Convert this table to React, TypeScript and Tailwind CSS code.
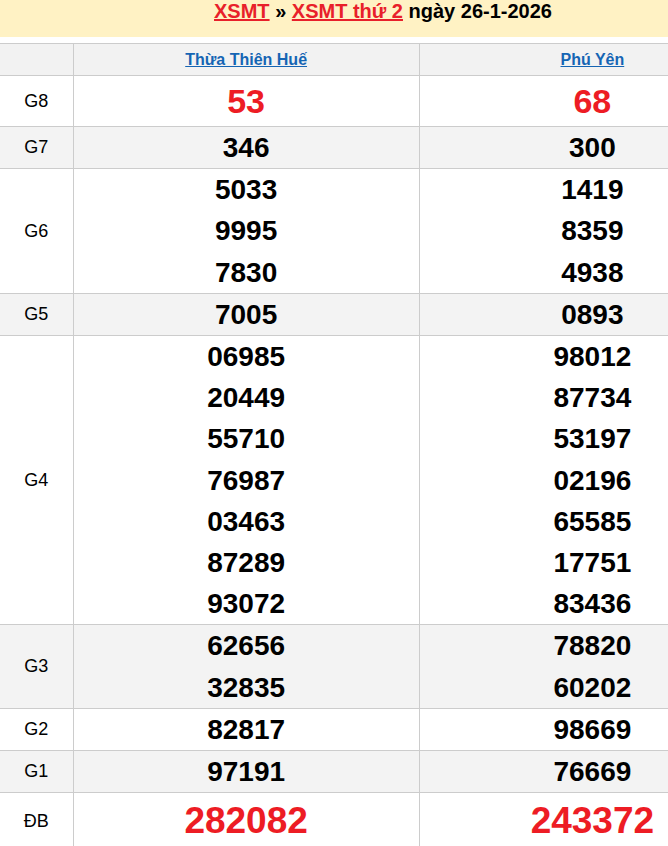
const rows: { label: string; a: string[]; b: string[]; kind?: "g8" | "db" }[] = [
  { label: "G8", a: ["53"], b: ["68"], kind: "g8" },
  { label: "G7", a: ["346"], b: ["300"] },
  { label: "G6", a: ["5033", "9995", "7830"], b: ["1419", "8359", "4938"] },
  { label: "G5", a: ["7005"], b: ["0893"] },
  {
    label: "G4",
    a: ["06985", "20449", "55710", "76987", "03463", "87289", "93072"],
    b: ["98012", "87734", "53197", "02196", "65585", "17751", "83436"],
  },
  { label: "G3", a: ["62656", "32835"], b: ["78820", "60202"] },
  { label: "G2", a: ["82817"], b: ["98669"] },
  { label: "G1", a: ["97191"], b: ["76669"] },
  { label: "ĐB", a: ["282082"], b: ["243372"], kind: "db" },
]

function Cell({ nums, kind }: { nums: string[]; kind?: "g8" | "db" }) {
  return (
    <td className="border border-[#cccccc] p-0 text-center align-middle">
      {nums.map((n) => (
        <div
          key={n}
          className={
            kind === "g8"
              ? "text-[34px] font-bold leading-[50px] text-[#ed1c24]"
              : kind === "db"
                ? "text-[37px] font-bold leading-[56px] text-[#ed1c24]"
                : "text-[28px] font-bold leading-[41.2px] text-black"
          }
        >
          {n}
        </div>
      ))}
    </td>
  )
}

export default function App() {
  return (
    <div className="w-full overflow-hidden bg-white" style={{ fontFamily: '"Liberation Sans", Arial, sans-serif' }}>
      <div className="w-[766px]">
        <div className="h-[37px] bg-[#fff2c4] text-center text-[20px] font-bold leading-[23px]">
          <a href="#" className="text-[#e8202a] underline">XSMT</a>
          <span> » </span>
          <a href="#" className="text-[#e8202a] underline">XSMT thứ 2</a>
          <span> ngày 26-1-2026</span>
        </div>
        <table className="mt-[6px] w-full table-fixed border-collapse">
          <colgroup>
            <col className="w-[73px]" />
            <col />
            <col />
          </colgroup>
          <thead>
            <tr className="h-[32px] bg-[#f2f2f2]">
              <th className="border border-l-0 border-[#cccccc]"></th>
              <th className="border border-[#cccccc] text-[16px] font-bold">
                <a href="#" className="text-[#1565b4] underline">Thừa Thiên Huế</a>
              </th>
              <th className="border border-[#cccccc] text-[16px] font-bold">
                <a href="#" className="text-[#1565b4] underline">Phú Yên</a>
              </th>
            </tr>
          </thead>
          <tbody>
            {rows.map((r, i) => (
              <tr key={r.label} className={i % 2 === 1 ? "bg-[#f3f3f3]" : "bg-white"}>
                <td className="border border-l-0 border-[#cccccc] text-center align-middle text-[18px] text-black">
                  {r.label}
                </td>
                <Cell nums={r.a} kind={r.kind} />
                <Cell nums={r.b} kind={r.kind} />
              </tr>
            ))}
          </tbody>
        </table>
      </div>
    </div>
  )
}
